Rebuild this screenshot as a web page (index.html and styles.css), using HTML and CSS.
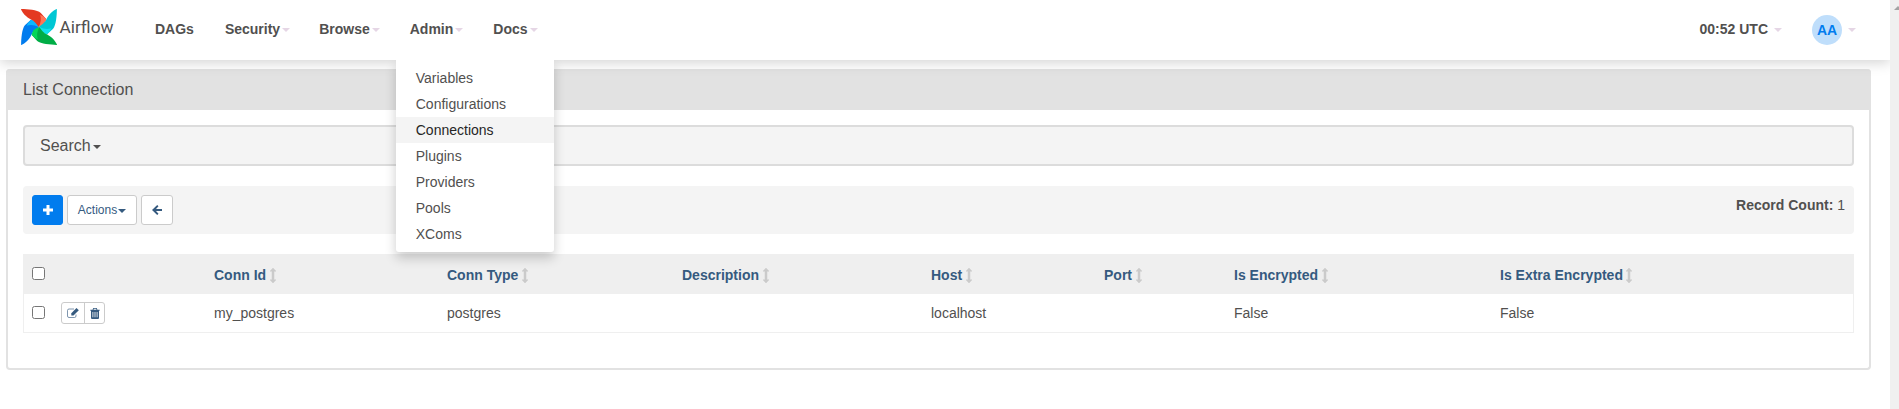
FILE: index.html
```html
<!DOCTYPE html>
<html lang="en">
<head>
<meta charset="utf-8">
<title>List Connection - Airflow</title>
<link rel="stylesheet" href="styles.css">
</head>
<body>
<svg class="defs" width="0" height="0">
  <symbol id="sort" viewBox="0 0 6 15"><path d="M3 0L6 3.2H4V11.8H6L3 15L0 11.8H2V3.2H0Z"/></symbol>
  <symbol id="blade" viewBox="0 0 60 60" overflow="visible"><path d="M.8 60C14 53 17 44 19 40Q23 35 30 30.500Q27 27 23.500 25.500C20 21 19 18 16.500 18L6.500 27C1.500 33 .3 49 .2 59.500Q.3 60.300 .8 60Z"/></symbol>
  <symbol id="fold" viewBox="0 0 60 60" overflow="visible"><path d="M30 30.500C22 26.500 16 26 9.500 28Q11.500 22.500 16.500 18C19 17.500 20 19 24.500 20.500Q28 24 30 30.500Z"/></symbol>
</svg>
<div class="page">
  <header class="navbar">
    <a class="brand">
      <svg class="pinwheel" viewBox="0 0 60 60">
        <g><use href="#blade" width="60" height="60" fill="#017cee"/><use href="#fold" width="60" height="60" fill="#0cb6ff"/></g>
        <g transform="rotate(90 30 30)"><use href="#blade" width="60" height="60" fill="#e43921"/><use href="#fold" width="60" height="60" fill="#ff7557"/></g>
        <g transform="rotate(180 30 30)"><use href="#blade" width="60" height="60" fill="#00c7d4"/><use href="#fold" width="60" height="60" fill="#11e1ee"/></g>
        <g transform="rotate(270 30 30)"><use href="#blade" width="60" height="60" fill="#00ad46"/><use href="#fold" width="60" height="60" fill="#04d659"/></g>
      </svg>
      <span class="brand-name">Airflow</span>
    </a>
    <nav class="menu">
      <a>DAGs</a>
      <a>Security<b class="caret"></b></a>
      <a>Browse<b class="caret"></b></a>
      <div class="menu-open">
        <a>Admin<b class="caret"></b></a>
        <ul class="dropdown">
          <li>Variables</li><li>Configurations</li><li class="active">Connections</li><li>Plugins</li><li>Providers</li><li>Pools</li><li>XComs</li>
        </ul>
      </div>
      <a>Docs<b class="caret"></b></a>
    </nav>
    <div class="user-area">
      <span class="clock">00:52 UTC<b class="caret"></b></span>
      <span class="user"><span class="avatar">AA</span><b class="caret"></b></span>
    </div>
  </header>
  <main class="panel">
    <h1 class="panel-heading">List Connection</h1>
    <div class="panel-body">
      <div class="search">Search<b class="caret"></b></div>
      <div class="toolbar">
        <button class="btn btn-add"><svg width="10" height="10" viewBox="0 0 10 10"><path d="M3.500 0h3v3.500H10v3H6.500V10h-3V6.500H0v-3h3.500z"/></svg></button>
        <button class="btn btn-actions">Actions<b class="caret"></b></button>
        <button class="btn btn-back"><svg width="10" height="10" viewBox="0 0 10 10"><path d="M5.200 0L6.500 1.300L4 3.900H10V6.100H4L6.500 8.700L5.200 10L0 5Z"/></svg></button>
        <div class="count"><strong>Record Count:</strong> 1</div>
      </div>
      <table class="list">
        <colgroup><col class="c-check"><col class="c-tools"><col class="c-id"><col class="c-type"><col class="c-desc"><col class="c-host"><col class="c-port"><col class="c-enc"><col></colgroup>
        <thead><tr>
          <th><input type="checkbox"></th><th></th>
          <th>Conn Id<svg class="sort"><use href="#sort"/></svg></th>
          <th>Conn Type<svg class="sort"><use href="#sort"/></svg></th>
          <th>Description<svg class="sort"><use href="#sort"/></svg></th>
          <th>Host<svg class="sort"><use href="#sort"/></svg></th>
          <th>Port<svg class="sort"><use href="#sort"/></svg></th>
          <th>Is Encrypted<svg class="sort"><use href="#sort"/></svg></th>
          <th>Is Extra Encrypted<svg class="sort"><use href="#sort"/></svg></th>
        </tr></thead>
        <tbody><tr>
          <td><input type="checkbox"></td>
          <td><div class="tools">
            <span><svg width="12" height="10" viewBox="0 0 12 10"><path class="outline" d="M7 1H2Q.5 1 .5 2.500V8Q.5 9.500 2 9.500H7.500Q9 9.500 9 8V6.500"/><path d="M9.500 0L11.800 2.200L6.500 7.500H4.300V5.200Z"/></svg></span>
            <span><svg width="10" height="11" viewBox="0 0 10 11"><path fill-rule="evenodd" d="M3.200 0h3.600l.6 1.700H9.700v1H9V9.700Q9 11 8 11H2Q1 11 1 9.700V2.700H.3v-1H2.600ZM3.800 .8L3.500 1.700H6.500L6.200 .8ZM2.500 4v5.200h.8V4ZM4.600 4v5.200h.8V4ZM6.700 4v5.200h.8V4Z"/></svg></span>
          </div></td>
          <td>my_postgres</td><td>postgres</td><td></td><td>localhost</td><td></td><td>False</td><td>False</td>
        </tr></tbody>
      </table>
    </div>
  </main>
</div>
<div class="scrollbar"><i class="scroll-up"></i></div>
</body>
</html>
```

FILE: styles.css
```css
* { box-sizing: border-box; }
body { margin: 0; height: 409px; display: flex; overflow: hidden; background: #fff; color: #51504f; font: 14px/20px "Liberation Sans", Arial, sans-serif; }
.defs { position: absolute; }
.page { width: 1890px; height: 409px; overflow: hidden; }
.scrollbar { width: 9px; background: #f0f0f0; overflow: hidden; padding: 6px 0 0 4px; }
.scroll-up { display: block; width: 8px; border: 4px solid transparent; border-top: 0; border-bottom-color: #a3a3a3; }
.navbar { position: relative; z-index: 2; display: flex; height: 60px; background: #fff; box-shadow: 0 3px 12px rgba(0,0,0,.17); font-weight: bold; }
.brand { display: flex; width: 140px; padding: 9px 0 0 21px; }
.pinwheel { width: 36px; height: 36px; }
.brand-name { margin: 8px 0 0 2.5px; font: 17.3px/20px Roboto, sans-serif; }
.menu { display: flex; }
.menu a { display: block; padding: 19px 15px 21px; white-space: nowrap; }
.menu > a:first-child { padding-right: 16px; }
.menu > a:nth-child(2) { padding-right: 14px; }
.caret { display: inline-block; width: 8px; height: 4px; margin-left: 2px; vertical-align: middle; border: 4px solid transparent; border-top-color: currentColor; border-bottom: 0; }
.navbar .caret { border-top-color: #e5d6e5; }
.menu-open { position: relative; }
.dropdown { position: absolute; left: 1px; top: 60px; width: 158px; height: 192px; margin: 0; padding: 5px 0; list-style: none; background: #fff; border-radius: 0 0 3px 3px; box-shadow: 0 6px 12px rgba(0,0,0,.2); font-weight: normal; clip-path: inset(0 -24px -24px); }
.dropdown li { height: 26px; padding: 3px 20px; }
.dropdown .active { background: #f4f4f4; color: #262626; }
.user-area { display: flex; margin-left: auto; padding-right: 34px; }
.clock { padding-top: 19px; margin-right: 30px; }
.clock .caret { margin-left: 6px; }
.user { display: flex; align-items: center; }
.avatar { width: 30px; height: 30px; border-radius: 50%; background: #bfdefb; color: #017cee; text-align: center; line-height: 31px; }
.user .caret { margin-left: 6px; }
.panel { width: 1865px; height: 301px; margin: 9px 0 0 6px; border: 2px solid #e2e2e2; border-top: 0; border-radius: 4px; }
.panel-heading { height: 41px; margin: 0 -2px; padding: 11px 17px 10px; border-radius: 4px 4px 0 0; background: #e2e2e2; font-size: 16px; font-weight: normal; line-height: 20px; }
.panel-body { padding: 15px; }
.search { height: 41px; padding: 8px 15px; border: 2px solid #dcdcdc; border-radius: 4px; background: #f4f4f4; font-size: 16px; line-height: 21px; }
.toolbar { display: flex; gap: 4px; height: 48px; margin: 20px 0; padding: 9px; border-radius: 4px; background: #f4f4f4; }
.btn { display: flex; align-items: center; justify-content: center; height: 30px; padding: 0; border: 1px solid #cbcbcb; border-radius: 3px; background: #fff; color: #355a7f; font: 12px/18px "Liberation Sans", Arial, sans-serif; }
.btn svg, .tools svg { fill: currentColor; }
.tools .outline { fill: none; stroke: currentColor; stroke-width: .8; opacity: .8; }
.btn .caret { margin-left: 1px; margin-top: 2px; }
.btn-add { width: 31px; border-color: #017cee; background: #017cee; color: #fff; }
.btn-actions { width: 70px; }
.btn-back { width: 32px; }
.count { margin-left: auto; }
.list { width: 1831px; table-layout: fixed; border-collapse: separate; border-spacing: 0; border: 1px solid #efefef; border-top: 0; }
.list th, .list td { padding: 0 8px; text-align: left; white-space: nowrap; }
.list th { height: 40px; padding-top: 2px; background: #efefef; color: #355a7f; }
.list td { height: 38px; }
.list input { display: block; width: 13px; height: 13px; margin: 0; }
.list th input { margin-top: -3px; }
.list td input { margin-top: -1px; }
.c-check { width: 29px; } .c-tools { width: 153px; } .c-id { width: 233px; } .c-type { width: 235px; } .c-desc { width: 249px; } .c-host { width: 173px; } .c-port { width: 130px; } .c-enc { width: 266px; }
.sort { width: 6px; height: 15px; margin-left: 3.5px; vertical-align: -3px; fill: #cbcbcb; stroke: #cbcbcb; stroke-width: .5; }
.tools { display: flex; width: 44px; height: 22px; border: 1px solid #cbcbcb; border-radius: 3px; color: #355a7f; }
.tools span { display: flex; flex: 1; align-items: center; justify-content: center; }
.tools span + span { flex: 0 0 20px; border-left: 1px solid #cbcbcb; }
```
